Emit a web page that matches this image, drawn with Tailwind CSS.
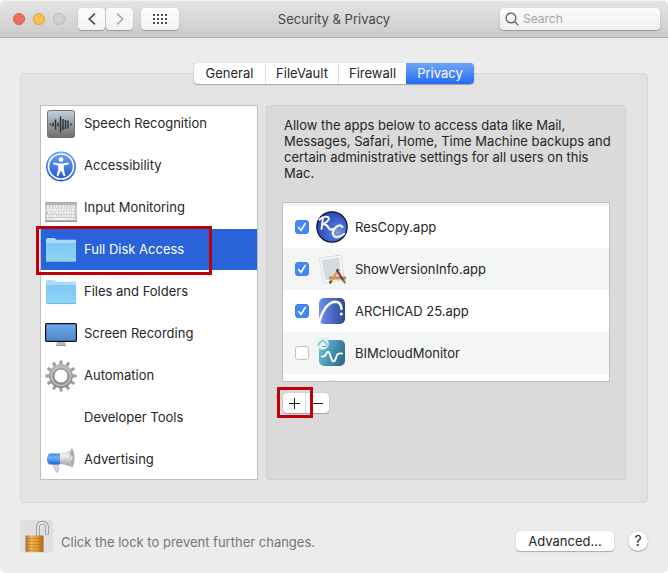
<!DOCTYPE html>
<html lang="en">
<head>
    <meta charset="UTF-8">
    <meta name="viewport" content="width=device-width, initial-scale=1.0">
    <title>Security &amp; Privacy</title>
    <script src="https://cdn.jsdelivr.net/npm/@tailwindcss/browser@4"></script>
</head>
<body class="bg-white font-[Inter,'Liberation_Sans',sans-serif] text-[13px] leading-4 text-[#262626]">

<div class="min-h-screen flex flex-col bg-[#ececec] rounded-md overflow-hidden">

    <!-- Title bar -->
    <header class="grid grid-cols-[1fr_auto_1fr] items-center h-[38px] px-2 bg-linear-to-b from-[#e4e4e4] to-[#cbcbcb] border-b border-[#b0b0b0] border-t border-t-[#f2f2f2]">
        <div class="flex items-center gap-2">
            <div class="flex gap-2 px-[5px]">
                <button aria-label="Close" class="size-3 rounded-full bg-[#ed6a5e] border border-[#d9594d]"></button>
                <button aria-label="Minimize" class="size-3 rounded-full bg-[#f5c04f] border border-[#dba73b]"></button>
                <button aria-label="Zoom" disabled class="size-3 rounded-full bg-[#cfcfcf] border border-[#bababa]"></button>
            </div>
            <div class="flex gap-px">
                <button aria-label="Back" class="grid place-items-center w-[27px] h-[22px] rounded bg-linear-to-b from-[#fdfdfd] to-[#f3f3f3] shadow-[0_1px_1px_#00000040,0_0_1px_#00000040]">
                    <svg class="w-2 h-3" viewBox="0 0 8 12" fill="none" stroke="#484848" stroke-width="1.6"><path d="M7 .6 1.2 6 7 11.4"/></svg>
                </button>
                <button aria-label="Forward" disabled class="grid place-items-center w-[27px] h-[22px] rounded bg-linear-to-b from-[#fafafa] to-[#f3f3f3] shadow-[0_1px_1px_#00000040,0_0_1px_#00000040]">
                    <svg class="w-2 h-3" viewBox="0 0 8 12" fill="none" stroke="#a9a9a9" stroke-width="1.6"><path d="M1 .6 6.8 6 1 11.4"/></svg>
                </button>
            </div>
            <button aria-label="Show all" class="grid place-items-center w-[38px] h-[22px] rounded bg-linear-to-b from-[#fdfdfd] to-[#f3f3f3] shadow-[0_1px_1px_#00000040,0_0_1px_#00000040]">
                <svg class="w-[14px] h-[10px]" viewBox="0 0 14 10" stroke="#4c4c4c" stroke-width="2" stroke-dasharray="2 2"><path d="M0 1h14M0 5h14M0 9h14"/></svg>
            </button>
        </div>
        <h1 class="text-[#474747]">Security &amp; Privacy</h1>
        <label class="justify-self-end flex items-center gap-1 w-40 h-[22px] px-[5px] rounded bg-linear-to-b from-[#fbfbfb] to-[#f1f1f1] shadow-[0_1px_1px_#00000040,0_0_1px_#00000040]">
            <svg class="size-[14px] shrink-0" viewBox="0 0 14 14" fill="none" stroke="#555" stroke-width="1.2"><circle cx="6" cy="6" r="4.9"/><path d="m9.6 9.6 3.8 3.8"/></svg>
            <input type="text" placeholder="Search" aria-label="Search" class="w-full min-w-0 bg-transparent outline-none text-xs placeholder:text-[#a5a5a5]">
        </label>
    </header>

    <main class="flex-1 px-5 pt-[25px]">
        <!-- Tabs -->
        <nav class="relative z-10 flex w-fit h-[21px] mx-auto -mb-[11px] rounded bg-white shadow-[0_1px_1px_#00000040,0_0_1px_#00000050]">
            <button class="w-[72px] pb-px border-r border-[#dcdcdc]">General</button>
            <button class="w-[73px] pb-px border-r border-[#dcdcdc]">FileVault</button>
            <button class="w-[67px] pb-px">Firewall</button>
            <button class="w-[68px] pb-px rounded-r bg-linear-to-b from-[#6ea5f8] to-[#2668f5] text-white">Privacy</button>
        </nav>

        <section class="flex gap-2 pt-[31px] pb-[22px] pl-[19px] pr-[21px] rounded bg-[#e3e3e3] border border-[#d8d8d8]">

            <!-- Categories -->
            <div class="relative w-[218px] shrink-0">
                <div class="h-[375px] overflow-hidden bg-white border border-[#bfbfbf]">
                    <ul class="-mt-[3px]">
                        <li class="flex items-center gap-[7px] h-[42px] px-1">
                            <svg class="size-8 shrink-0" viewBox="0 0 32 32">
                                <defs><linearGradient id="speech" x2="0" y2="1"><stop stop-color="#c2d0da"/><stop offset=".5" stop-color="#98a0a5"/><stop offset="1" stop-color="#6d6d6d"/></linearGradient></defs>
                                <rect x="2.5" y="2.5" width="27" height="27" rx="2" fill="url(#speech)" stroke="#6f7478"/>
                                <path d="M5.5 15.5v2M8 14.5v4M10.5 11.5v10M13 14.5v4M15.500 8.500v16M18 11v11M20.5 12v9M23 12.500v8M26 15.500v2" stroke="#333" stroke-width="1.5"/>
                            </svg>
                            <span class="pb-[2px]">Speech Recognition</span>
                        </li>
                        <li class="flex items-center gap-[7px] h-[42px] px-1">
                            <svg class="size-8 shrink-0" viewBox="0 0 32 32">
                                <defs><linearGradient id="access" x2="0" y2="1"><stop stop-color="#6fa6f2"/><stop offset="1" stop-color="#2250d2"/></linearGradient></defs>
                                <circle cx="16" cy="16.5" r="15" fill="url(#access)"/>
                                <circle cx="16" cy="16.5" r="12.5" fill="none" stroke="#fff" stroke-width="1.6"/>
                                <circle cx="16" cy="9.5" r="2.3" fill="#fff"/>
                                <path d="M8.5 12.6 14 13.5h4l5.5-.9.3 1.6-5 1.3v4l1.6 6.3-1.7.5L16.4 21h-.8l-2.3 5.3-1.7-.5 1.6-6.3v-4l-5-1.300z" fill="#fff"/>
                            </svg>
                            <span class="pb-[2px]">Accessibility</span>
                        </li>
                        <li class="flex items-center gap-[7px] h-[42px] px-1">
                            <svg class="size-8 shrink-0" viewBox="0 0 32 32">
                                <defs><linearGradient id="keys" x2="0" y2="1"><stop stop-color="#a9a9a9"/><stop offset=".3" stop-color="#cfcfcf"/><stop offset="1" stop-color="#c4c4c4"/></linearGradient></defs>
                                <rect y="10" width="32" height="20" rx="1" fill="url(#keys)"/>
                                <path d="M0 29.3h32" stroke="#999" stroke-width="1.4"/>
                                <path d="M2 14.5h28M2 27h28" stroke="#f7f7f7" stroke-width="2" stroke-dasharray="2.2 .8"/>
                                <path d="M2 17.6h28M2 23.8h28" stroke="#fafafa" stroke-width="2.2" stroke-dasharray="1.7 .8"/>
                                <path d="M3 20.7h27" stroke="#fafafa" stroke-width="2.2" stroke-dasharray="1.9 .8"/>
                                <path d="M10 27h11" stroke="#f7f7f7" stroke-width="2"/>
                            </svg>
                            <span class="pb-[2px]">Input Monitoring</span>
                        </li>
                        <li class="flex items-center gap-[7px] h-[42px] px-1 bg-[#2863d9] text-white border-b border-white" aria-current="true">
                            <svg class="size-8 shrink-0" viewBox="0 0 32 32">
                                <defs><linearGradient id="folder" x2="0" y2="1"><stop stop-color="#7dc8f5"/><stop offset="1" stop-color="#91d4f5"/></linearGradient></defs>
                                <path d="M1 6q0-2 2-2h6q1 0 1.800 1l.7.8H30q1 0 1 1V12H1z" fill="#a9dcfa"/>
                                <path d="M1 9h30v17.5q0 1.5-1.5 1.5h-27Q1 28 1 26.500z" fill="url(#folder)"/>
                                <path d="M1.5 27.600h29" stroke="#69a9cc" stroke-width=".8"/>
                            </svg>
                            <span class="pb-px">Full Disk Access</span>
                        </li>
                        <li class="flex items-center gap-[7px] h-[42px] px-1">
                            <svg class="size-8 shrink-0" viewBox="0 0 32 32">
                                <path d="M1 6q0-2 2-2h6q1 0 1.800 1l.7.8H30q1 0 1 1V12H1z" fill="#a9dcfa"/>
                                <path d="M1 9h30v17.5q0 1.5-1.5 1.5h-27Q1 28 1 26.500z" fill="url(#folder)"/>
                                <path d="M1.5 27.600h29" stroke="#69a9cc" stroke-width=".8"/>
                            </svg>
                            <span class="pb-[2px]">Files and Folders</span>
                        </li>
                        <li class="flex items-center gap-[7px] h-[42px] px-1">
                            <svg class="size-8 shrink-0" viewBox="0 0 32 32">
                                <defs><linearGradient id="screen" x2="0" y2="1"><stop stop-color="#6eaae9"/><stop offset="1" stop-color="#4c87c6"/></linearGradient></defs>
                                <path d="M11.5 23h9v5h-9z" fill="#b8b8b8"/><path d="M11 27.500h10" stroke="#9b9b9b"/>
                                <rect x=".6" y="5.6" width="30.8" height="17.8" rx="1" fill="url(#screen)" stroke="#0d0f12" stroke-width="1.2"/>
                            </svg>
                            <span class="pb-[2px]">Screen Recording</span>
                        </li>
                        <li class="flex items-center gap-[7px] h-[42px] px-1">
                            <svg class="size-8 shrink-0" viewBox="0 0 32 32">
                                <defs><linearGradient id="gear" x2="0" y2="1"><stop stop-color="#b4b8ba"/><stop offset="1" stop-color="#818487"/></linearGradient></defs>
                                <g stroke="#9a9da0" stroke-width="3">
                                    <path d="M16 .5v31M.5 16h31"/>
                                    <path d="M16 .5v31M.5 16h31" transform="rotate(30 16 16)"/>
                                    <path d="M16 .5v31M.5 16h31" transform="rotate(60 16 16)"/>
                                </g>
                                <circle cx="16" cy="16" r="12" fill="url(#gear)"/>
                                <circle cx="16" cy="16" r="9.6" fill="none" stroke="#bfc2c4" stroke-width="1.5"/>
                                <circle cx="16" cy="16" r="7" fill="#fff" stroke="#85888a"/>
                            </svg>
                            <span class="pb-[2px]">Automation</span>
                        </li>
                        <li class="flex items-center h-[42px] pl-[43px]">
                            <span class="pb-[2px]">Developer Tools</span>
                        </li>
                        <li class="flex items-center gap-[7px] h-[42px] px-1">
                            <svg class="size-8 shrink-0" viewBox="0 0 32 32">
                                <defs>
                                    <linearGradient id="horn" x2="0" y2="1"><stop stop-color="#c8c8c8"/><stop offset=".4" stop-color="#f0f0f0"/><stop offset="1" stop-color="#8d8d8d"/></linearGradient>
                                    <linearGradient id="grip" x2="0" y2="1"><stop stop-color="#3f83e0"/><stop offset=".35" stop-color="#6fb4fa"/><stop offset="1" stop-color="#2467cf"/></linearGradient>
                                </defs>
                                <path d="M7.5 20H13l.8 7-2.3 1.500z" fill="#d8d8d8" stroke="#a4a4a4" stroke-width=".6"/>
                                <path d="M14 9.500Q22 9 27 4.500v19Q22 20 14 20z" fill="url(#horn)"/>
                                <path d="M4.500 9.500H15V20.500H4.500Q2 19 2 15t2.500-5.500z" fill="url(#grip)"/>
                                <ellipse cx="27" cy="14" rx="2.4" ry="9.5" fill="#a6a6a6" stroke="#dedede"/>
                                <ellipse cx="26.5" cy="14" rx="1" ry="3" fill="#e8e8e8"/>
                            </svg>
                            <span class="pb-[2px]">Advertising</span>
                        </li>
                    </ul>
                </div>
                <div class="absolute -left-1 top-[121px] w-[176px] h-[49px] border-3 border-[#bf0006]"></div>
            </div>

            <!-- Apps of the selected category -->
            <div class="flex-1 h-[375px] px-[15px] pt-[11px] rounded bg-[#dadada] border border-[#d0d0d0]">
                <p class="pl-0.5 -mr-1">Allow the apps below to access data like Mail, Messages, Safari, Home, Time Machine backups and certain administrative settings for all users on this Mac.</p>

                <div class="h-[180px] mt-[21px] overflow-hidden bg-white border border-[#bfbfbf]">
                    <div class="h-[3px] bg-[#f4f5f5]"></div>
                    <label class="flex items-center h-[42px] pl-3">
                        <span class="grid shrink-0 mr-[7px]">
                            <input type="checkbox" checked class="peer col-start-1 row-start-1 appearance-none size-[14px] rounded-[3px] border border-[#c4c4c4] bg-white checked:bg-[#4587f6] checked:border-[#4080ee]">
                            <svg class="hidden peer-checked:block col-start-1 row-start-1 size-[14px] pointer-events-none" viewBox="0 0 14 14" fill="none" stroke="#fff" stroke-width="1.6" stroke-linecap="round"><path d="m3.6 7.5 2.4 2.8 4.200-6.800"/></svg>
                        </span>
                        <svg class="size-8 shrink-0" viewBox="0 0 32 32">
                            <defs><radialGradient id="rc" cx=".68" cy=".68" r=".7"><stop stop-color="#8fa0c8"/><stop offset=".35" stop-color="#4a70d2"/><stop offset="1" stop-color="#2747bd"/></radialGradient></defs>
                            <circle cx="16" cy="16" r="15.2" fill="url(#rc)" stroke="#10142a" stroke-width="1.2"/>
                            <path d="M7 6.500 5.500 18M3.500 8.500Q8 4.500 12 6q3 2.500-4.500 7 3.500.5 5.500 4.500 1.500 2 3.500.5" fill="none" stroke="#fff" stroke-width="1.9" stroke-linecap="round"/>
                            <path d="M26.500 16q-3-3.500-7.500 1-4 5.500-.5 8.500 4 1.800 9.500-2.500" fill="none" stroke="#f2f5ff" stroke-width="2.2" stroke-linecap="round"/>
                        </svg>
                        <span class="ml-[7px] pb-px">ResCopy.app</span>
                    </label>
                    <label class="flex items-center h-[42px] pl-3 bg-[#f4f5f5]">
                        <span class="grid shrink-0 mr-[7px]">
                            <input type="checkbox" checked class="peer col-start-1 row-start-1 appearance-none size-[14px] rounded-[3px] border border-[#c4c4c4] bg-white checked:bg-[#4587f6] checked:border-[#4080ee]">
                            <svg class="hidden peer-checked:block col-start-1 row-start-1 size-[14px] pointer-events-none" viewBox="0 0 14 14" fill="none" stroke="#fff" stroke-width="1.6" stroke-linecap="round"><path d="m3.6 7.5 2.4 2.8 4.200-6.800"/></svg>
                        </span>
                        <svg class="size-8 shrink-0" viewBox="0 0 32 32">
                            <path d="m3.500 5.500 21-3.500 4 24.500-21 3.500z" fill="#fff" stroke="#d2d2d2" stroke-width=".8"/>
                            <path d="m5.500 7 17.500-3 3 20.500-17 3z" fill="#d3dce2"/>
                            <path d="M13 23.500h17v3H13z" fill="#b98f5e"/>
                            <path d="m21.500 18-6.500 10.500" stroke="#e69b31" stroke-width="2.2"/>
                            <path d="m15.200 27.800-1.500 2.700" stroke="#5b3b22" stroke-width="2"/>
                            <path d="m21 17.500 7 11" stroke="#8f2d1e" stroke-width="2"/>
                            <path d="m27 27 2.300 3.200" stroke="#777" stroke-width="2"/>
                            <path d="m20.500 17.800 2-1.300" stroke="#40444e" stroke-width="2.2"/>
                        </svg>
                        <span class="ml-[7px] pb-px">ShowVersionInfo.app</span>
                    </label>
                    <label class="flex items-center h-[42px] pl-3">
                        <span class="grid shrink-0 mr-[7px]">
                            <input type="checkbox" checked class="peer col-start-1 row-start-1 appearance-none size-[14px] rounded-[3px] border border-[#c4c4c4] bg-white checked:bg-[#4587f6] checked:border-[#4080ee]">
                            <svg class="hidden peer-checked:block col-start-1 row-start-1 size-[14px] pointer-events-none" viewBox="0 0 14 14" fill="none" stroke="#fff" stroke-width="1.6" stroke-linecap="round"><path d="m3.6 7.5 2.4 2.8 4.200-6.800"/></svg>
                        </span>
                        <svg class="size-8 shrink-0" viewBox="0 0 32 32">
                            <defs><linearGradient id="archi"><stop stop-color="#6d8ff2"/><stop offset="1" stop-color="#2e4797"/></linearGradient></defs>
                            <rect x="3" y="3" width="26" height="26" rx="5" fill="url(#archi)"/>
                            <path d="M3.500 26Q9 8 19 6.800q6 0 6.500 7" fill="none" stroke="#fff" stroke-width="2.6" stroke-linecap="round"/>
                            <circle cx="25.3" cy="19" r="1.5" fill="#fff"/>
                        </svg>
                        <span class="ml-[7px] pb-px">ARCHICAD 25.app</span>
                    </label>
                    <label class="flex items-center h-[42px] pl-3 bg-[#f4f5f5]">
                        <span class="grid shrink-0 mr-[7px]">
                            <input type="checkbox" class="peer col-start-1 row-start-1 appearance-none size-[14px] rounded-[3px] border border-[#c4c4c4] bg-white checked:bg-[#4587f6] checked:border-[#4080ee]">
                            <svg class="hidden peer-checked:block col-start-1 row-start-1 size-[14px] pointer-events-none" viewBox="0 0 14 14" fill="none" stroke="#fff" stroke-width="1.6" stroke-linecap="round"><path d="m3.6 7.5 2.4 2.8 4.200-6.800"/></svg>
                        </span>
                        <svg class="size-8 shrink-0" viewBox="0 0 32 32">
                            <defs><linearGradient id="bim" y2=".4"><stop stop-color="#62cbe0"/><stop offset="1" stop-color="#34708f"/></linearGradient></defs>
                            <rect x="3" y="3" width="26" height="26" rx="5" fill="url(#bim)"/>
                            <path d="M6 19.500q3 .5 4.500-3 1.500-3.500 3 0l2.500 6.500q1.700 3 3.400-.5l1.600-4.500Q22 16 26 16.500" fill="none" stroke="#fff" stroke-width="1.9" stroke-linecap="round"/>
                            <circle cx="6.8" cy="6.8" r="5.8" fill="#e9eff3" stroke="#d3dde2" stroke-width=".6"/>
                            <path d="M3 8.500q-.5-2.500 1.500-3 1-2.500 3.500-1.500Q9.500 5 9.500 6q2 .5 1.200 2.500-1 1.500-3 1H6" fill="none" stroke="#45bad2" stroke-width="1.1"/>
                        </svg>
                        <span class="ml-[7px] pb-px">BIMcloudMonitor</span>
                    </label>
                    <div class="pl-[33px]">
                        <svg class="size-8" viewBox="0 0 32 32"><circle cx="16" cy="19" r="13" fill="#e4e4e4"/></svg>
                    </div>
                </div>

                <div class="relative flex w-fit h-5 mt-[11px] ml-px rounded bg-white shadow-[0_1px_1px_#00000040,0_0_1px_#00000050]">
                    <button aria-label="Add" class="grid place-items-center w-[23px] border-r border-[#dcdcdc]">
                        <svg class="size-[11px]" viewBox="0 0 11 11" stroke="#1e1e1e"><path d="M0 5.500h11M5.500 0v11"/></svg>
                    </button>
                    <button aria-label="Remove" class="grid place-items-center w-[23px]">
                        <svg class="size-[11px]" viewBox="0 0 11 11" stroke="#1e1e1e"><path d="M0 5.500h11"/></svg>
                    </button>
                    <div class="absolute -left-[6px] -top-[6px] w-9 h-[31px] border-3 border-[#bf0006] pointer-events-none"></div>
                </div>
            </div>
        </section>
    </main>

    <footer class="flex items-center px-5 pt-[17px] pb-5">
        <button aria-label="Lock" class="size-[33px] shrink-0 rounded bg-[#dfdfdf]">
            <svg class="size-[33px]" viewBox="0 0 33 33">
                <defs><linearGradient id="brass"><stop stop-color="#b0701f"/><stop offset=".3" stop-color="#eeb558"/><stop offset=".7" stop-color="#d9932f"/><stop offset="1" stop-color="#a4651a"/></linearGradient></defs>
                <path d="M18 17V7q0-4.200 4.500-4.200T27 7v7.500" fill="none" stroke="#7d868c" stroke-width="3.6"/>
                <path d="M18 17V7q0-4.200 4.500-4.200T27 7v7" fill="none" stroke="#dbe3e8" stroke-width="2.2"/>
                <rect x="5.5" y="15.5" width="18" height="16.5" rx="1" fill="url(#brass)"/>
                <path d="M6 18.500h17M6 21.500h17M6 24.500h17M6 27.500h17M6 30.500h17" stroke="#a96b1d" stroke-width=".8" opacity=".5"/>
            </svg>
        </button>
        <p class="flex-1 pl-2 pt-[10px] text-[#767676]">Click the lock to prevent further changes.</p>
        <button class="w-[98px] h-5 mt-2 rounded bg-white shadow-[0_1px_1px_#00000040,0_0_1px_#00000050]">Advanced...</button>
        <button aria-label="Help" class="size-5 mt-2 ml-[14px] rounded-full bg-white shadow-[0_1px_1px_#00000040,0_0_1px_#00000050] text-sm">?</button>
    </footer>
</div>

</body>
</html>
